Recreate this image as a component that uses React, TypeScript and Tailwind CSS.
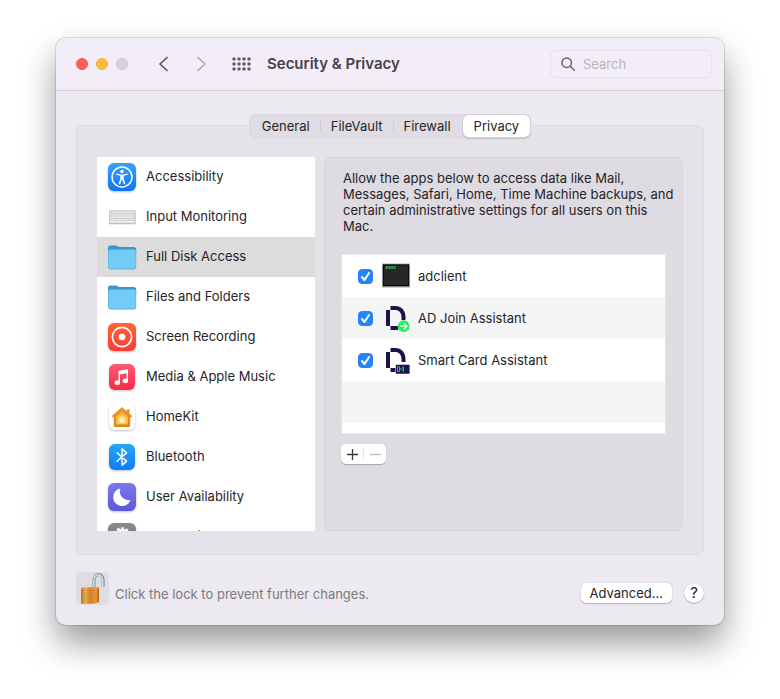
import { useState } from 'react';
import type { ElementType, ReactNode } from 'react';
import { clsx } from 'clsx';

/* ── Sidebar icons ── */
function Tile({ id, from, to, small, children }: {
  id: string; from: string; to: string; small?: boolean; children: ReactNode;
}) {
  const inset = small ? 1 : 0;
  return (
    <svg viewBox="0 0 28 28" className="size-7 overflow-visible drop-shadow-[0_1px_1px_rgba(0,0,0,0.25)]" aria-hidden="true">
      <defs>
        <linearGradient id={id} x1="0" y1="0" x2="0" y2="1">
          <stop offset="0" stopColor={from} />
          <stop offset="1" stopColor={to} />
        </linearGradient>
      </defs>
      <rect x={inset} y={inset} width={28 - inset * 2} height={28 - inset * 2} rx="6" fill={`url(#${id})`} />
      {children}
    </svg>
  );
}

function AccessibilityIcon() {
  return (
    <Tile id="accessibility" from="#3aa0fb" to="#0a74fd">
      <circle cx="14" cy="14" r="10" fill="none" stroke="#fff" strokeWidth="1.5" />
      <circle cx="14" cy="8.5" r="1.7" fill="#fff" />
      <path d="M8.4 10.6 12.6 11.4h2.8l4.2-.8.2 1.1-4.1 1v2.9l1.6 5.4-1.3.4-1.8-5h-.4l-1.8 5-1.3-.4 1.6-5.4v-2.9l-4.1-1z" fill="#fff" />
    </Tile>
  );
}

function KeyboardIcon() {
  return (
    <svg viewBox="0 0 28 28" className="size-7" aria-hidden="true">
      <rect x="1" y="7.5" width="26.5" height="13.8" rx="1" fill="#b3b3b3" />
      <rect x="1" y="7.5" width="26.5" height="13" rx="1" fill="#cbcbcb" />
      {[8.4, 10.8, 13.2, 15.6].map((y, row) => (
        <path key={y} d={`M${1.8 + row * 0.2} ${y + 0.9}H26.6`} stroke="#f1f1f1" strokeWidth="1.6" strokeDasharray="1.5 0.5" />
      ))}
      <path d="M1.8 18.9h5.2M7.6 18.9h10M18.2 18.900h8.4" stroke="#f1f1f1" strokeWidth="1.6" />
    </svg>
  );
}

function FolderIcon() {
  return (
    <svg viewBox="0 0 28 28" className="size-7 overflow-visible" aria-hidden="true">
      <path d="M0 5C0 3.400.8 2.400 2.400 2.400h5.200c2 0 2.200 1.600 4.200 1.600h13.800c1.600 0 2.600.9 2.600 2.500V12H0z" fill="#3598cb" />
      <path d="M0 8.500C0 7 .9 6.200 2.400 6.200h23.400c1.500 0 2.400.8 2.400 2.300v15.300c0 1.500-.9 2.600-2.400 2.600H2.400C.9 26.400 0 25.300 0 23.800z" fill="#56a9d8" />
      <path d="M.6 8.700c0-1.200.8-1.900 2-1.900h23c1.200 0 2 .7 2 1.900v14.800c0 1.400-.8 2.200-2 2.200h-23c-1.200 0-2-.8-2-2.200z" fill="#75cbf8" />
    </svg>
  );
}

function RecordIcon() {
  return (
    <Tile id="record" from="#fc6535" to="#fd3a35">
      <circle cx="14" cy="14" r="9.6" fill="none" stroke="#fff" strokeWidth="1.7" />
      <circle cx="14" cy="14" r="3.3" fill="#fff" />
    </Tile>
  );
}

function MusicIcon() {
  return (
    <Tile id="music" from="#fb5b73" to="#fa2a45" small>
      <path d="M10.500 8 20 6v12.200a2.700 2.200 0 1 1-1.500-2.300V10.200L12 11.600v8.300a2.700 2.300 0 1 1-1.500-2.200z" fill="#fff" />
    </Tile>
  );
}

function HomeIcon() {
  return (
    <Tile id="home-tile" from="#ffffff" to="#ffffff" small>
      <defs>
        <linearGradient id="home" x1="0" y1="0" x2="0" y2="1">
          <stop offset="0" stopColor="#f0952d" />
          <stop offset="1" stopColor="#e58119" />
        </linearGradient>
      </defs>
      <path d="M14 4 18.800 8.200V6.200h2.800v4.500l2 1.900c.7.800.2 1.600-.6 1.600h-.8v8.600c0 .7-.4 1.200-1.200 1.200H7c-.8 0-1.200-.5-1.200-1.200v-8.600H5c-.8 0-1.300-.8-.6-1.600z" fill="url(#home)" />
      <path d="m14 8.500 6 5.300v7.700H8v-7.700z" fill="#f9b840" />
      <path d="m14 11.500 4 3.500v5.500h-8V15z" fill="#fbd470" />
      <path d="m14 14.300 2.200 1.900v3.300h-4.400v-3.300z" fill="#fff2bd" />
    </Tile>
  );
}

function BluetoothIcon() {
  return (
    <Tile id="bluetooth" from="#22a7fa" to="#127af8" small>
      <path d="m9 9.800 9.600 8.300-4.500 4.200V5.700l4.500 4.200L9 18.200" fill="none" stroke="#fff" strokeWidth="1.500" strokeLinejoin="round" strokeLinecap="round" />
    </Tile>
  );
}

function MoonIcon() {
  return (
    <Tile id="moon" from="#7c79ec" to="#5b58de">
      <path d="M12.400 5.400a8.600 8.600 0 0 0 10.200 11.400A8.900 8.900 0 1 1 12.400 5.400z" fill="#fff" />
    </Tile>
  );
}

function GearIcon() {
  return (
    <Tile id="gear" from="#8b8b8e" to="#6f6f73">
      <circle cx="14" cy="14" r="7" fill="none" stroke="#fff" strokeWidth="2" />
      <circle cx="14" cy="14" r="8.5" fill="none" stroke="#fff" strokeWidth="2.4" strokeDasharray="2.7 1.75" strokeDashoffset="1" />
      <circle cx="14" cy="14" r="2" fill="#fff" />
    </Tile>
  );
}

/* ── App icons ── */
function ExecIcon() {
  return (
    <svg viewBox="0 0 28 28" className="size-7" aria-hidden="true">
      <rect x="0" y="1.500" width="28" height="24" rx="0.5" fill="#a9adad" />
      <rect x="0.8" y="2.300" width="26.4" height="22" fill="#0c0c0c" />
      <rect x="2" y="3.500" width="24" height="19.5" fill="#272727" />
      <text x="3.5" y="7.300" fontSize="4.5" fontWeight="700" fontFamily="Liberation Mono, monospace" fill="#35d665">exec</text>
    </svg>
  );
}

function LetterD() {
  return (
    <>
      <path d="M4 6h4v16H4z" fill="#1d1250" />
      <path d="M8.5 2H13c6.500 0 10.500 4.600 10.500 11v3h-4v-3c0-4.300-2.600-7-6.500-7H8.5z" fill="#1d1250" />
      <path d="M8.5 22H16v4H8.5z" fill="#1d1250" />
    </>
  );
}

function JoinIcon() {
  return (
    <svg viewBox="0 0 28 28" className="size-7" aria-hidden="true">
      <LetterD />
      <circle cx="21.7" cy="22.2" r="5.9" fill="#23f45d" />
      <path d="M18.200 22.200h6.600m-2.900-3 3 3-3 3" fill="none" stroke="#fff" strokeWidth="1.300" />
    </svg>
  );
}

function SmartCardIcon() {
  return (
    <svg viewBox="0 0 28 28" className="size-7" aria-hidden="true">
      <LetterD />
      <rect x="13.3" y="18.3" width="14.5" height="9.7" rx="0.8" fill="#fff" />
      <rect x="13.8" y="18.8" width="13.8" height="9" rx="0.6" fill="#1d1250" />
      <path d="M15.500 20.700h2v4.800h-2zM21.500 20.700l-2 2.400 2 2.400zM17.500 23.100h2" fill="none" stroke="#25c060" strokeWidth="1" />
    </svg>
  );
}

function PadlockIcon() {
  return (
    <svg viewBox="0 0 33 33" className="size-[33px]" aria-hidden="true">
      <defs>
        <linearGradient id="brass" x1="0" y1="0" x2="1" y2="0">
          <stop offset="0" stopColor="#c87519" />
          <stop offset="0.25" stopColor="#f1b45c" />
          <stop offset="0.5" stopColor="#d98526" />
          <stop offset="0.85" stopColor="#eb9f3c" />
          <stop offset="1" stopColor="#a95f14" />
        </linearGradient>
      </defs>
      <path d="M18 17V9c0-9 9.200-8.500 9.200 0v5.500" fill="none" stroke="#81929a" strokeWidth="3" />
      <path d="M17.800 17V9c0-8.600 9-8.100 9 0v5.500" fill="none" stroke="#dce5e8" strokeWidth="1.300" />
      <path d="M5 16.500 7 15.300h15l1 .8v14.200l-5 1.500-12 .2-1-1z" fill="url(#brass)" />
      <path d="M5 18.500h13l5-.5M5 20.800h13l5-.5M5 23.100h13l5-.5M5 25.400h13l5-.5M5 27.700h13l5-.5M5 30h13l5-.8" fill="none" stroke="#b3681b" strokeWidth="0.500" opacity="0.700" />
    </svg>
  );
}

const categories: { name: string; icon: ElementType }[] = [
  { name: 'Accessibility', icon: AccessibilityIcon },
  { name: 'Input Monitoring', icon: KeyboardIcon },
  { name: 'Full Disk Access', icon: FolderIcon },
  { name: 'Files and Folders', icon: FolderIcon },
  { name: 'Screen Recording', icon: RecordIcon },
  { name: 'Media & Apple Music', icon: MusicIcon },
  { name: 'HomeKit', icon: HomeIcon },
  { name: 'Bluetooth', icon: BluetoothIcon },
  { name: 'User Availability', icon: MoonIcon },
  { name: 'Automation', icon: GearIcon },
];

const apps: { name: string; icon: ElementType }[] = [
  { name: 'adclient', icon: ExecIcon },
  { name: 'AD Join Assistant', icon: JoinIcon },
  { name: 'Smart Card Assistant', icon: SmartCardIcon },
];

const tabs = ['General', 'FileVault', 'Firewall', 'Privacy'];

/* ── Title bar ── */
function TitleBar() {
  return (
    <header className="flex h-[53px] items-center border-b border-[#d3ced8] bg-[#f2edf7] pr-3 pl-5">
      <div className="flex gap-2">
        <button aria-label="Close" className="size-3 rounded-full border border-[#f0564f] bg-[#fe5f58]" />
        <button aria-label="Minimize" className="size-3 rounded-full border border-[#efaf36] bg-[#fdb93a]" />
        <button aria-label="Zoom" disabled className="size-3 rounded-full border border-[#c9c4ce] bg-[#d7d2dc]" />
      </div>
      <button aria-label="Back" className="ml-7 text-[#5b565f]">
        <svg viewBox="0 0 14 16" className="h-4 w-3.5" fill="none" stroke="currentColor" strokeWidth="1.7" strokeLinecap="round" strokeLinejoin="round">
          <path d="M11 1.500 4 8l7 6.500" />
        </svg>
      </button>
      <button aria-label="Forward" disabled className="ml-6 text-[#aeaab2]">
        <svg viewBox="0 0 14 16" className="h-4 w-3.5" fill="none" stroke="currentColor" strokeWidth="1.7" strokeLinecap="round" strokeLinejoin="round">
          <path d="m4 1.500 7 6.500-7 6.500" />
        </svg>
      </button>
      <button aria-label="Show all" className="ml-6 text-[#5b565f]">
        <svg viewBox="0 0 19 14" className="h-3.5 w-[19px]" fill="currentColor">
          {[0.5, 5.5, 10.5].map(y =>
            [0.5, 5.5, 10.5, 15.5].map(x => <rect key={`${x}-${y}`} x={x} y={y} width="3" height="3" rx="0.8" />),
          )}
        </svg>
      </button>
      <h1 className="ml-4 flex-1 text-[15px] font-semibold whitespace-nowrap text-[#464249]">Security &amp; Privacy</h1>
      <label className="flex h-7 w-[162px] items-center gap-2 rounded-md border border-[#e5e0ea] pl-2.5">
        <svg viewBox="0 0 14 14" className="size-3.5 shrink-0" fill="none" stroke="#67626b" strokeWidth="1.5" strokeLinecap="round" aria-hidden="true">
          <circle cx="5.7" cy="5.7" r="4.7" />
          <path d="m9.300 9.300 3.900 3.900" />
        </svg>
        <input type="text" aria-label="Search" placeholder="Search" className="w-full min-w-0 bg-transparent outline-none placeholder:text-[#b8b3bd]" />
      </label>
    </header>
  );
}

/* ── Tab switcher ── */
function Tabs({ active, onSelect }: { active: string; onSelect: (tab: string) => void }) {
  return (
    <div role="tablist" className="relative flex h-[22px] items-center rounded-md bg-[#dfdce3] shadow-[0_0_0_1px_#d9d6dd]">
      {tabs.map((tab, i) => (
        <button
          key={tab}
          role="tab"
          aria-selected={tab === active}
          onClick={() => onSelect(tab)}
          className={clsx(
            'flex h-full items-center rounded-md',
            tab === active && 'bg-white px-[11px] shadow-[0_0_0_1px_#d2cfd6,0_1px_1px_1px_rgba(0,0,0,0.15)]',
            tab !== active && (i === 0 ? 'pl-3' : 'pl-0'),
          )}
        >
          {tab}
          {i < tabs.length - 2 && <span className="mx-2.5 h-3 w-px bg-[#cfccd3]" />}
          {i === tabs.length - 2 && <span className="w-3" />}
        </button>
      ))}
    </div>
  );
}

/* ── Category list ── */
function Sidebar({ selected, onSelect }: { selected: string; onSelect: (name: string) => void }) {
  return (
    <nav aria-label="Privacy categories" className="h-[374px] w-[218px] shrink-0 overflow-hidden bg-white">
      {categories.map(({ name, icon: Icon }) => (
        <button
          key={name}
          onClick={() => onSelect(name)}
          className={clsx('flex h-10 w-full items-center gap-2.5 pl-[11px] text-left', name === selected && 'bg-[#dcdcdc]')}
        >
          <Icon />
          <span className="pb-0.5">{name}</span>
        </button>
      ))}
    </nav>
  );
}

/* ── App row ── */
function AppRow({ name, icon: Icon }: { name: string; icon: ElementType }) {
  return (
    <label className="flex h-[42px] items-center pl-4 even:bg-[#f4f5f5]">
      <span className="grid">
        <input type="checkbox" defaultChecked className="peer col-start-1 row-start-1 size-[15px] appearance-none rounded border border-[#c4c1c8] bg-white checked:border-[#2484fb] checked:bg-[#2484fb]" />
        <svg viewBox="0 0 15 15" className="pointer-events-none invisible col-start-1 row-start-1 size-[15px] peer-checked:visible" fill="none" stroke="#fff" strokeWidth="2" strokeLinecap="round" strokeLinejoin="round" aria-hidden="true">
          <path d="m4 8 2.500 3L11 4" />
        </svg>
      </span>
      <span className="ml-[9px] shrink-0"><Icon /></span>
      <span className="ml-2">{name}</span>
    </label>
  );
}

export default function App() {
  const [tab, setTab] = useState('Privacy');
  const [category, setCategory] = useState('Full Disk Access');

  return (
    <div className="min-h-screen bg-white px-14 py-[38px] font-['Inter','Liberation_Sans',sans-serif] text-[13px] leading-4 text-[#262428]">
      <main className="overflow-hidden rounded-[10px] bg-[#ece9f0] shadow-[0_0_0_1px_rgba(0,0,0,0.12),0_18px_34px_rgba(0,0,0,0.4)]">
        <TitleBar />

        <div className="px-5 pt-6 pb-5">
          <div className="flex justify-center">
            <Tabs active={tab} onSelect={setTab} />
          </div>

          {/* Grouped panel, tucked under the tabs */}
          <section className="-mt-3 flex gap-[9px] rounded-md border border-[#dfdce3] bg-[#e5e2e9] px-5 pt-[31px] pb-[23px]">
            <Sidebar selected={category} onSelect={setCategory} />

            <div className="min-w-0 flex-1 rounded-md border border-[#d9d6dd] bg-[#dedbe2] px-4 pt-3">
              <p className="-mr-3 pl-0.5">
                Allow the apps below to access data like Mail, Messages, Safari, Home, Time Machine backups, and
                certain administrative settings for all users on this Mac.
              </p>
              <div className="mt-5 h-[180px] overflow-hidden border border-[#e7e5e9] bg-white">
                {apps.map(app => <AppRow key={app.name} {...app} />)}
                <div className="h-[42px] bg-[#f4f5f5]" />
              </div>
              <div className="mt-2.5 inline-flex h-5 items-center rounded-[5px] bg-white shadow-[0_1px_1px_rgba(0,0,0,0.25)]">
                <button aria-label="Add" className="flex h-5 w-[22px] items-center justify-center text-[#39363b]">
                  <svg viewBox="0 0 11 11" className="size-[11px]" stroke="currentColor" strokeWidth="1.3"><path d="M5.500 0v11M0 5.500h11" /></svg>
                </button>
                <span className="h-3 w-px bg-[#e6e4e8]" />
                <button aria-label="Remove" disabled className="flex h-5 w-[22px] items-center justify-center text-[#bdbabf]">
                  <svg viewBox="0 0 11 11" className="size-[11px]" stroke="currentColor" strokeWidth="1.3"><path d="M0 5.500h11" /></svg>
                </button>
              </div>
            </div>
          </section>

          {/* Footer */}
          <footer className="mt-[17px] flex items-center">
            <button aria-label="Lock" className="rounded bg-[#dfdce3]"><PadlockIcon /></button>
            <p className="ml-1.5 flex-1 pt-2.5 text-[#7c7980]">Click the lock to prevent further changes.</p>
            <button className="mt-2 h-5 rounded-[5px] bg-white px-[9px] shadow-[0_0_1px_rgba(0,0,0,0.3),0_1px_1px_rgba(0,0,0,0.2)]">Advanced...</button>
            <button aria-label="Help" className="mt-2 ml-3 size-5 rounded-full bg-white text-[15px] shadow-[0_0_1px_rgba(0,0,0,0.3),0_1px_1px_rgba(0,0,0,0.2)]">?</button>
          </footer>
        </div>
      </main>
    </div>
  );
}
